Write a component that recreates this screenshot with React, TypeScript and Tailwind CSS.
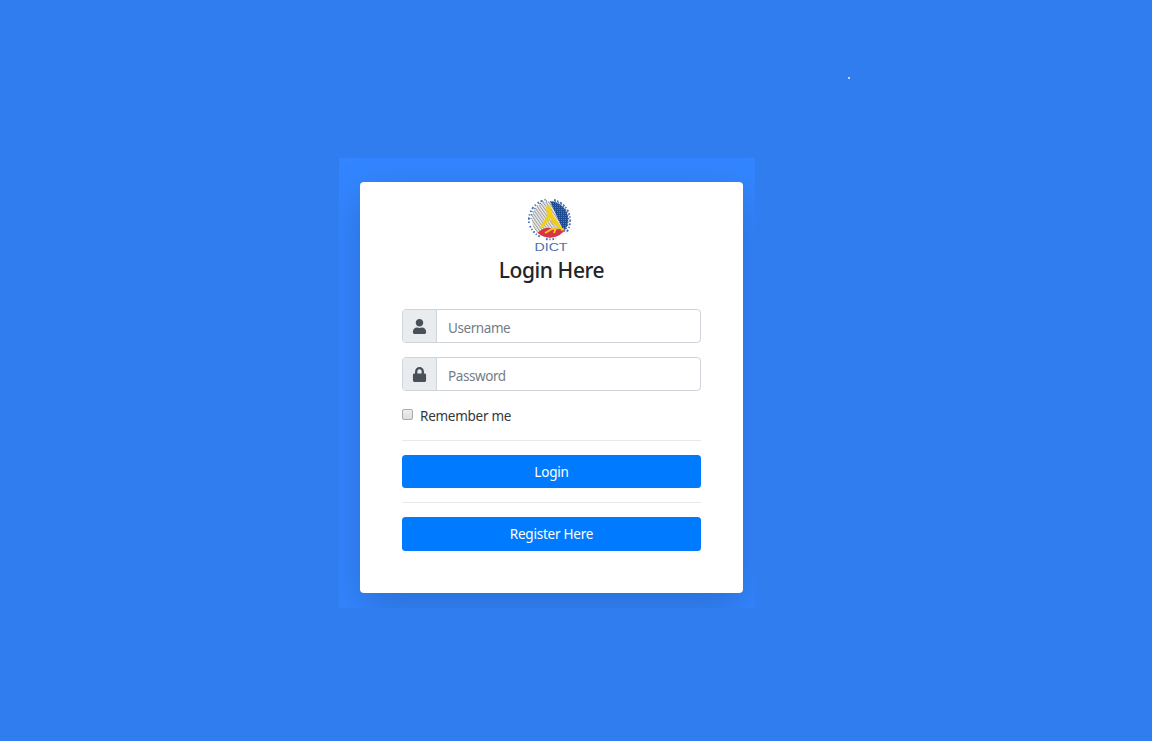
import type { ReactNode } from "react";
import { FaLock, FaUser } from "react-icons/fa";

function Logo() {
  return (
    <svg width="46" height="56" viewBox="0 0 46 56" aria-label="DICT">
      <defs>
        <clipPath id="disc"><circle cx="23" cy="22.5" r="18.2" /></clipPath>
        <pattern id="grey" width="2.4" height="2.4" patternUnits="userSpaceOnUse" patternTransform="rotate(-35)">
          <rect width="2.4" height="2.4" fill="#f1f1f1" /><rect width="1.1" height="2.4" fill="#9f9f9f" />
        </pattern>
        <pattern id="navy" width="2" height="2" patternUnits="userSpaceOnUse">
          <rect width="2" height="2" fill="#1d4c92" /><rect width="1" height="1" fill="#5b76a0" />
        </pattern>
      </defs>
      <g clipPath="url(#disc)">
        <rect width="46" height="46" fill="url(#grey)" />
        <path d="M22 2H46V36L36 33Z" fill="url(#navy)" />
        <path d="M8 38Q17 29 23 31Q34 34 46 30V46H6Z" fill="#d93444" />
        <path d="M19 10L21 8L24 10L25 16L29 22L36 32L32 32L27 25L24 21L18 28L14 32L13 30L20 19Z" fill="#f1cf1c" />
        <path d="M18 36L25 32L31 31M29 31L27 36M24 23L29 28M34 33L37 32" fill="none" stroke="#ebc927" strokeWidth="2" />
      </g>
      <g fill="none" stroke="#24549b" opacity=".85">
        <path d="M2 26A21 21 0 0 1 20 2.5" strokeWidth="1.8" strokeDasharray="1.6 1.8 2.2 2 1.2 2.4" />
        <path d="M4 22A19.5 19.5 0 0 1 20 4" strokeWidth="1.2" strokeDasharray="1 2.5 1.6 2" />
        <path d="M27 3A21 21 0 0 1 39 36" strokeWidth="1.8" strokeDasharray="1.8 1.5 1.2 2 2.2 1.6" />
        <path d="M28 4A19.5 19.5 0 0 1 37 35" strokeWidth="1.2" strokeDasharray="1 1.9 1.5 2.2" />
        <path d="M3 29A21 21 0 0 0 14 40M19 42A21 21 0 0 0 29 41.5" strokeWidth="1.8" strokeDasharray="1.7 1.7 1.2 1.8" />
      </g>
      <text x="7.5" y="54" fontFamily="Liberation Sans" fontSize="10.5" fill="#4871ac" textLength="33" lengthAdjust="spacingAndGlyphs">DICT</text>
    </svg>
  );
}

function Field({ icon, type, placeholder }: { icon: ReactNode; type: string; placeholder: string }) {
  return (
    <label className="flex h-[34px] overflow-hidden rounded-[4px] border border-[#ced4da] bg-white">
      <span className="flex w-[34px] shrink-0 items-center justify-center border-r border-[#ced4da] bg-[#e9ecef] text-[#495057]">{icon}</span>
      <input type={type} placeholder={placeholder} className="min-w-0 flex-1 px-[11px] pt-[4px] text-[13.5px] tracking-[-0.42px] outline-none placeholder:text-[#757d84]" />
    </label>
  );
}

export default function App() {
  return (
    <main className="relative h-[741px] overflow-hidden bg-[#307def] pl-[339px] pt-[158px] font-['Noto_Sans',sans-serif] text-[#212529]">
      <span className="absolute left-[848px] top-[77px] h-[2px] w-[2px] bg-[#bdd6fb]" />
      <div className="h-[450px] w-[416px] overflow-hidden bg-[#3385ff] pl-[21px] pt-6">
        <form className="flex h-[411px] w-[383px] flex-col rounded-[4px] bg-white px-[42px] pt-[15px] shadow-[0_14px_43px_rgba(0,0,0,0.175)]">
          <div className="flex h-[56px] justify-center pr-[3px]"><Logo /></div>
          <h1 className="h-[56px] text-center text-[21px] font-medium leading-[35px] tracking-[-0.42px]">Login Here</h1>
          <div className="flex flex-col gap-[14px]">
            <Field icon={<FaUser size={15} />} type="text" placeholder="Username" />
            <Field icon={<FaLock size={15} />} type="password" placeholder="Password" />
          </div>
          <label className="mt-[14px] flex h-[22px] items-center text-[13.5px] tracking-[-0.27px] text-[#33373b]">
            <input type="checkbox" className="relative top-[-2px] mr-[7px] h-[11px] w-[11px] appearance-none rounded-[2px] border border-[#aaa] bg-gradient-to-b from-[#eee] to-[#ddd]" />
            Remember me
          </label>
          <hr className="mt-[13px] border-[#e9e9e9]" />
          <button type="button" className="mt-[14px] h-[33px] shrink-0 rounded-[3.5px] bg-[#007bff] pt-[2px] text-[13.5px] tracking-[-0.22px] text-white">Login</button>
          <hr className="mt-[14px] border-[#e9e9e9]" />
          <button type="button" className="mt-[14px] h-[34px] shrink-0 rounded-[3.5px] bg-[#007bff] pt-px text-[13.5px] tracking-[-0.22px] text-white">Register Here</button>
        </form>
      </div>
    </main>
  );
}
